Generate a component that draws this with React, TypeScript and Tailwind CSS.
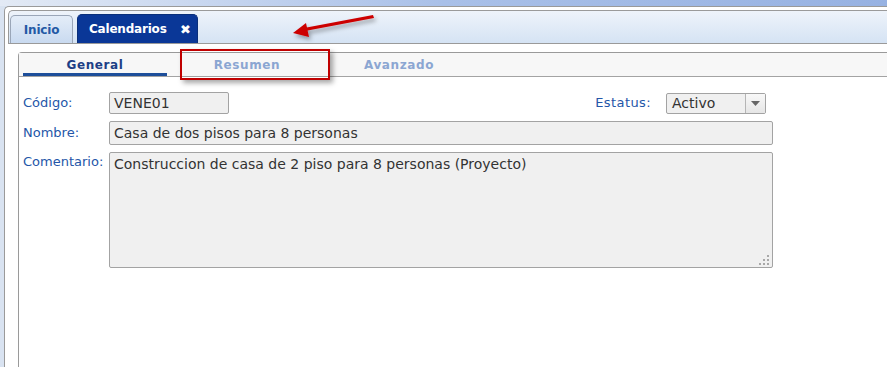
import React from 'react';

const font = { fontFamily: '"DejaVu Sans", Verdana, sans-serif' };

// Pestaña principal superior
const MainTab = ({ label, active, onClose }: { label: string; active?: boolean; onClose?: boolean }) => (
  <div
    className={`flex items-center rounded-t-[5px] border border-b-0 ${
      active
        ? 'w-[121px] h-[29px] border-[#0a2f7a] bg-[#0a3797] text-white pl-[11px] pr-[6px] justify-between'
        : 'w-[63px] h-[28px] border-[#9aa6b8] bg-gradient-to-b from-[#e4edf8] to-[#c9daf0] text-[#245aa5] justify-center'
    }`}
  >
    <span className="text-[12px] font-bold tracking-[-0.2px]">{label}</span>
    {onClose && <span className="text-[13px] font-bold leading-none">✖</span>}
  </div>
);

const SubTab = ({ label, active }: { label: string; active?: boolean }) => (
  <div
    className={`w-[144px] h-full flex items-center justify-center text-[12px] font-bold tracking-[0.6px] ${
      active ? 'text-[#1d3f86] border-b-[3px] border-[#1d4e9a] pt-[3px]' : 'text-[#8ba6d2]'
    }`}
  >
    {label}
  </div>
);

const Label = ({ children }: { children: React.ReactNode }) => (
  <div className="w-[86px] text-[13px] text-[#2456a8] shrink-0">{children}</div>
);

const Field = ({ value, className }: { value: string; className: string }) => (
  <div
    className={`bg-[#f0f0f0] border border-[#a3a3a3] rounded-[2px] text-[14px] text-[#333] pl-[4px] flex items-center ${className}`}
  >
    {value}
  </div>
);

export default function App() {
  return (
    <div className="w-[887px] h-[367px] overflow-hidden relative flex flex-col bg-[#d9e3f1]" style={font}>
      <div className="h-[6px] shrink-0 bg-gradient-to-r from-[#e3eaf5] via-[#a9c0e8] to-[#97b2e2]" />
      <div className="flex-1 pl-[4px] flex">
        <div className="flex-1 flex flex-col border-l border-t border-[#9a9a9a] rounded-tl-[5px] bg-white pl-[3px] pt-[3px]">
          {/* barra de pestañas */}
          <div className="h-[34px] shrink-0 flex items-end gap-[4px] pl-[1px] border-l border-t border-b border-[#9a9a9a] rounded-tl-[5px] bg-gradient-to-b from-[#eef3fa] to-[#d5e3f4]">
            <MainTab label="Inicio" />
            <MainTab label="Calendarios" active onClose />
          </div>

          {/* panel de contenido */}
          <div className="flex-1 ml-[10px] mt-[8px] border-l border-t border-[#9a9a9a] rounded-tl-[4px]">
            <div className="h-[24px] bg-[#f7f7f7] border-b border-[#a3a3a3] flex gap-[8px] pl-[4px]">
              <SubTab label="General" active />
              <SubTab label="Resumen" />
              <SubTab label="Avanzado" />
            </div>

            <div className="pl-[4px] pt-[15px] flex flex-col gap-[7px]">
              <div className="flex items-center h-[22px] w-[743px]">
                <Label>Código:</Label>
                <Field value="VENE01" className="w-[120px] h-[22px]" />
                <div className="flex-1" />
                <div className="text-[13px] text-[#2456a8] tracking-[0.4px] mr-[15px]">Estatus:</div>
                <div className="w-[100px] h-[21px] flex bg-[#f0f0f0] border border-[#a3a3a3] rounded-[2px]">
                  <div className="flex-1 text-[14px] text-[#333] pl-[5px] flex items-center">Activo</div>
                  <div className="w-[20px] border-l border-[#b5b5b5] bg-gradient-to-b from-[#f8f8f8] to-[#e6e6e6] flex items-center justify-center">
                    <svg width="9" height="5" viewBox="0 0 9 5">
                      <path d="M0 0h9L4.5 5z" fill="#666" />
                    </svg>
                  </div>
                </div>
              </div>

              <div className="flex items-center">
                <Label>Nombre:</Label>
                <Field value="Casa de dos pisos para 8 personas" className="w-[664px] h-[24px]" />
              </div>

              <div className="flex items-start">
                <Label>Comentario:</Label>
                <div className="relative w-[664px] h-[116px] bg-[#f0f0f0] border border-[#a3a3a3] rounded-[2px] text-[14px] text-[#333] pl-[4px] pt-[1px]">
                  Construccion de casa de 2 piso para 8 personas (Proyecto)
                  <svg className="absolute right-[3px] bottom-[2px]" width="10" height="10" viewBox="0 0 10 10">
                    <g fill="#a8a8a8">
                      <rect x="8" y="0" width="2" height="2" />
                      <rect x="4" y="4" width="2" height="2" />
                      <rect x="8" y="4" width="2" height="2" />
                      <rect x="0" y="8" width="2" height="2" />
                      <rect x="4" y="8" width="2" height="2" />
                      <rect x="8" y="8" width="2" height="2" />
                    </g>
                  </svg>
                </div>
              </div>
            </div>
          </div>
        </div>
      </div>

      {/* anotaciones */}
      <div className="absolute left-[180px] top-[49px] w-[150px] h-[31px] border-2 border-[#c00000] shadow-[3px_3px_5px_rgba(0,0,0,0.35)]" />
      <svg className="absolute left-0 top-0 pointer-events-none" width="887" height="367">
        <defs>
          <filter id="sh" x="-20%" y="-50%" width="140%" height="200%">
            <feDropShadow dx="2" dy="3" stdDeviation="2" floodColor="#000" floodOpacity="0.35" />
          </filter>
        </defs>
        <g filter="url(#sh)" fill="#cc0000">
          <path d="M373 15 L374 18 L305 31 L304 28 Z" />
          <path d="M293 33 L306 23 L309 37 Z" />
        </g>
      </svg>
    </div>
  );
}
